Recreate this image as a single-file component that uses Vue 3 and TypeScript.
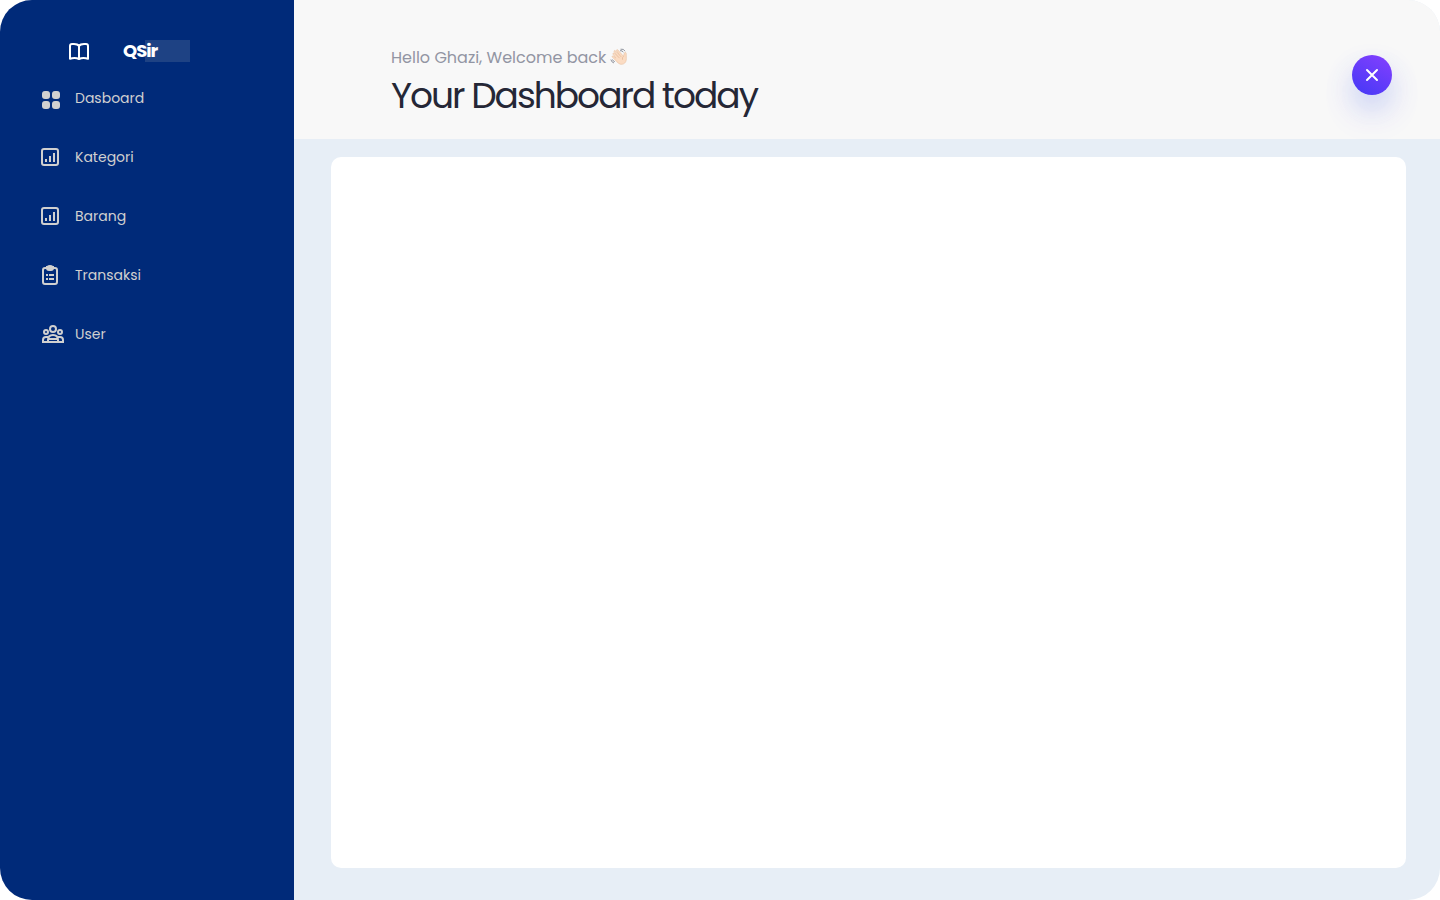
<script setup lang="ts">
type IconName = 'grid' | 'chart' | 'clipboard' | 'users'

interface NavItem {
  label: string
  icon: IconName
}

const items: NavItem[] = [
  { label: 'Dasboard', icon: 'grid' },
  { label: 'Kategori', icon: 'chart' },
  { label: 'Barang', icon: 'chart' },
  { label: 'Transaksi', icon: 'clipboard' },
  { label: 'User', icon: 'users' },
]
</script>

<template>
  <div class="app">
    <aside class="sidebar">
      <div class="brand">
        <svg class="book" viewBox="0 0 22 20" width="22" height="20" aria-hidden="true">
          <path
            d="M11 5C10 3.500 8 3 6 3H4Q2 3 2 5V17.800Q4 17 6.500 17Q9 17 11 18Q13 17 15.500 17Q18 17 20 17.800V5Q20 3 18 3H16C14 3 12 3.500 11 5ZM11 4.500V18"
            fill="none" stroke="#fff" stroke-width="2" stroke-linejoin="round" />
        </svg>
        <span class="name">QSir</span>
      </div>
      <nav class="nav">
        <a v-for="item in items" :key="item.label" class="link" href="#">
          <svg v-if="item.icon === 'grid'" class="icon" viewBox="0 0 24 24" width="24" height="24" aria-hidden="true">
            <g fill="currentColor">
              <rect x="2" y="5" width="8" height="8" rx="3" />
              <rect x="12" y="5" width="8" height="8" rx="3" />
              <rect x="2" y="15" width="8" height="8" rx="3" />
              <rect x="12" y="15" width="8" height="8" rx="3" />
            </g>
          </svg>
          <svg v-else-if="item.icon === 'chart'" class="icon" viewBox="0 0 24 24" width="24" height="24" aria-hidden="true">
            <g fill="none" stroke="currentColor" stroke-width="2">
              <rect x="2" y="4" width="16" height="16" rx="2" />
              <path d="M6 14V17M10 11V17M14 8V17" />
            </g>
          </svg>
          <svg v-else-if="item.icon === 'clipboard'" class="icon" viewBox="0 0 24 24" width="24" height="24" aria-hidden="true">
            <rect x="3" y="5" width="14" height="16" rx="2" fill="none" stroke="currentColor" stroke-width="2" />
            <path d="M6 3H7Q8 2 10 2T13 3H14V5Q14 8 11 8H9Q6 8 6 5Z" fill="currentColor" />
            <path d="M6 12H8M9 12H14M6 16H8M9 16H14" stroke="currentColor" stroke-width="2" />
          </svg>
          <svg v-else class="icon" viewBox="0 0 24 24" width="24" height="24" aria-hidden="true">
            <g fill="none" stroke="currentColor" stroke-width="2">
              <circle cx="13" cy="7" r="3" />
              <circle cx="6" cy="10" r="2" />
              <circle cx="20" cy="10" r="2" />
              <path d="M8 20V18Q8 13 13 13T18 18V20M3 20V18Q3 15 6 15H8M23 20V18Q23 15 20 15H18M2 20H24M9 17H17" />
            </g>
          </svg>
          <span>{{ item.label }}</span>
        </a>
      </nav>
    </aside>

    <div class="content">
      <header class="header">
        <div>
          <p class="greeting">
            <span>Hello Ghazi, Welcome back</span>
            <svg viewBox="0 0 18 18" width="18" height="18" aria-hidden="true">
              <path
                d="M3.100 6.300C2.500 5.500 3.400 4.600 4.200 5.200L7.500 8L4.200 3.800C3.600 2.900 4.700 2 5.400 2.800L9.200 6.700L6.600 2.800C6.100 1.900 7.200 1.200 7.900 2L11.700 6.300L12 6.500L13.600 8.200L14.300 5.200C14.700 4 16.200 4.300 16.200 5.500L16.300 10.600C16.500 14.600 13.500 16.900 10.500 16.200C8.700 15.800 7.300 14.200 6.100 12.900L2.400 9.100C1.700 8.200 2.600 7.500 3.400 8.200L5.800 10.100Z"
                fill="#fbdcc3" stroke="#e8bd9c" stroke-width=".6" stroke-linejoin="round" />
              <path d="M7.500 8L9.600 10.200M9.200 6.700L11.300 9M13.600 8.200Q11.800 9.500 12.600 11.800" fill="none" stroke="#dfb08e" stroke-width=".6" />
              <path d="M10.500 1.200Q14 .6 15 3.200M10 2.700Q12.500 2.300 13.300 4.300M.9 11.500Q1.300 14.200 4 15M2.500 11.500Q3 13.300 4.800 13.700" fill="none" stroke="#858994" stroke-width=".9" />
            </svg>
          </p>
          <h1 class="title">Your Dashboard today</h1>
        </div>
        <button class="close" type="button" aria-label="Close">
          <svg viewBox="0 0 16 16" width="16" height="16" aria-hidden="true">
            <path d="M3 3L13 13M13 3L3 13" stroke="#fff" stroke-width="2" stroke-linecap="round" />
          </svg>
        </button>
      </header>
      <main class="main">
        <section class="panel" aria-label="Dashboard content"></section>
      </main>
    </div>
  </div>
</template>

<style>
body {
  margin: 0;
  background: #fff;
}
</style>

<style scoped>
.app {
  display: flex;
  min-height: 100vh;
  border-radius: 32px;
  overflow: hidden;
  font-family: Poppins, Inter, "Open Sans", sans-serif;
}

.sidebar {
  flex: 0 0 294px;
  box-sizing: border-box;
  padding-top: 40px;
  background: #002a79;
}

.brand {
  display: flex;
  align-items: center;
  gap: 33px;
  height: 22px;
  padding-left: 68px;
}

.name {
  box-sizing: border-box;
  width: 67px;
  background: linear-gradient(90deg, transparent 22px, #1e4284 22px);
  color: #fff;
  font-size: 18px;
  font-weight: 700;
  line-height: 22px;
  letter-spacing: -1px;
}

.nav {
  display: flex;
  flex-direction: column;
  gap: 35px;
  padding: 24px 0 0 40px;
}

.link {
  display: flex;
  align-items: center;
  gap: 11px;
  height: 24px;
  color: #d0d0d0;
  font-size: 14px;
  line-height: 24px;
  text-decoration: none;
}

.icon {
  flex: none;
}

.content {
  flex: 1;
  display: flex;
  flex-direction: column;
  min-width: 0;
  background: #e7eef6;
}

.header {
  display: flex;
  justify-content: space-between;
  align-items: flex-start;
  box-sizing: border-box;
  min-height: 139px;
  padding: 46px 48px 16px 97px;
  background: #f8f8f8;
}

.greeting {
  display: flex;
  align-items: center;
  gap: 4px;
  margin: 0;
  color: #9295a3;
  font-size: 16px;
  line-height: 24px;
}

.greeting svg {
  margin-top: -3px;
}

.title {
  margin: 0;
  color: #252736;
  font-size: 36px;
  font-weight: 400;
  line-height: 52px;
  letter-spacing: -2px;
}

.close {
  display: grid;
  place-items: center;
  width: 40px;
  height: 40px;
  margin-top: 9px;
  padding: 0;
  border: 0;
  border-radius: 50%;
  background: linear-gradient(30deg, #4338f5, #8640ff);
  box-shadow: 0 14px 28px rgba(50, 95, 235, 0.22), 0 20px 44px rgba(134, 64, 255, 0.07);
  cursor: pointer;
}

.main {
  flex: 1;
  display: flex;
  padding: 18px 34px 32px 37px;
}

.panel {
  flex: 1;
  border-radius: 10px;
  background: #fff;
}
</style>
